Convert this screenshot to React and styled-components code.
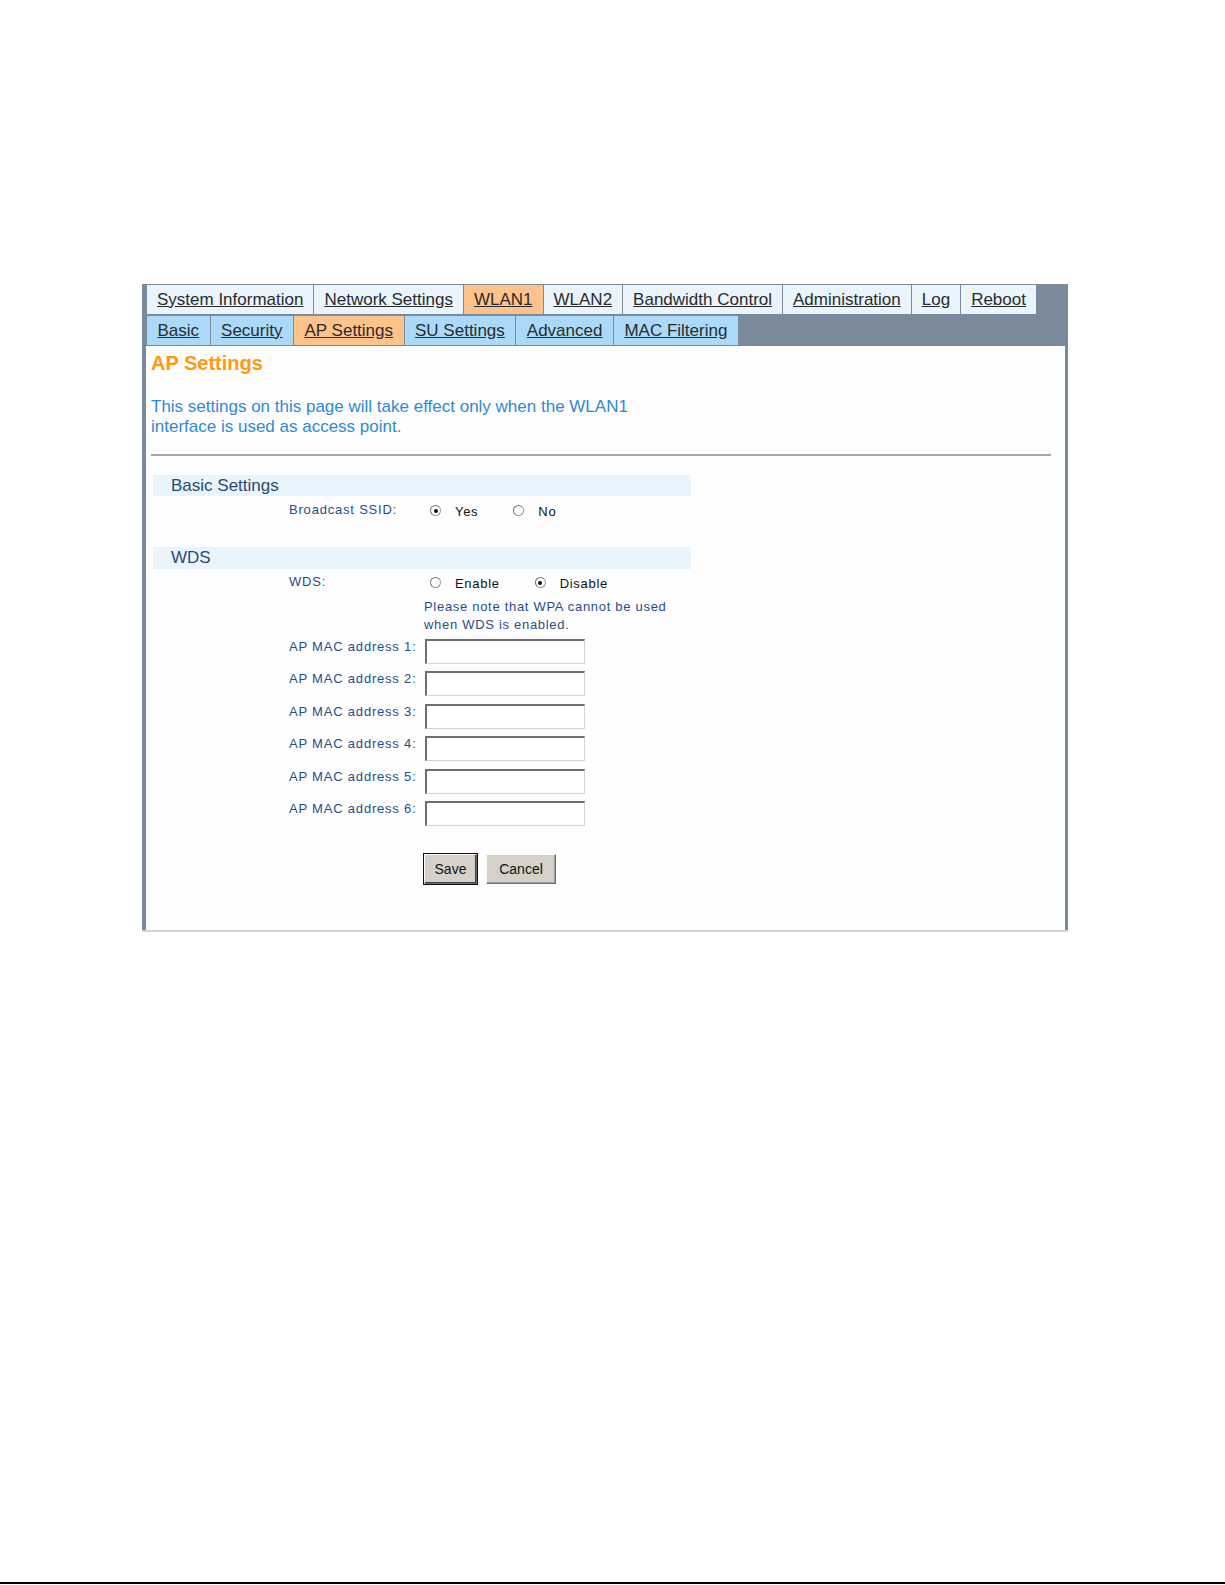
import React from 'react';
import styled, {createGlobalStyle} from 'styled-components';

const frameColor = '#7a8a9b';
const activeTab = '#fcc48c';
const labelBlue = '#1f4f86';

const GlobalStyle = createGlobalStyle`
  html, body {
    margin: 0;
    padding: 0;
    background: #ffffff;
  }
  body {
    font-family: "Liberation Sans", Arial, sans-serif;
  }
`;

const Page = styled.div`
  display: flex;
  flex-direction: column;
  height: 1585px;
  box-sizing: border-box;
  padding-top: 284px;
`;

const Frame = styled.div`
  width: 926px;
  margin-left: 142px;
  box-sizing: border-box;
  background: ${frameColor};
  padding: 1px 3px 0 4px;
  border-bottom: 2px solid #cfd5dd;
`;

const TabRow = styled.div`
  display: flex;
  gap: 1px;
  padding-left: 1px;
  margin-bottom: ${(props) => props.bottom || 0}px;
`;

const Tab = styled.a`
  display: flex;
  align-items: center;
  height: 29px;
  padding: 0 ${(props) => (props.sub ? 10.5 : 10)}px;
  font-size: 17px;
  color: #2b2b2b;
  text-decoration: underline;
  cursor: pointer;
  background: ${(props) =>
    props.active ? activeTab : props.sub ? '#aad9fa' : '#eaf4fd'};
`;

const Content = styled.div`
  background: #fefefe;
  height: 584px;
  box-sizing: border-box;
  padding: 5px 14px 0 5px;
`;

const Heading = styled.h1`
  margin: 0;
  font-size: 20px;
  line-height: 24px;
  font-weight: bold;
  color: #ff9a10;
`;

const Intro = styled.p`
  margin: 22px 0 0;
  font-size: 17px;
  line-height: 20px;
  color: #2c8ad6;
`;

const Rule = styled.div`
  height: 2px;
  background: #a8a8a8;
  margin: 17px 0 19px;
`;

const Form = styled.div`
  width: 538px;
  margin-left: 2px;
`;

const Band = styled.div`
  height: ${(props) => props.h || 21}px;
  display: flex;
  align-items: center;
  padding-left: 18px;
  background: #e9f4fd;
  font-size: 17px;
  color: #2a4b70;
`;

const Row = styled.div`
  display: grid;
  grid-template-columns: 136px 135px 1fr;
  align-items: start;
  height: ${(props) => props.h || 'auto'};
  padding-top: ${(props) => props.top || 0}px;
  box-sizing: border-box;
`;

const Label = styled.div`
  grid-column: 2;
  font-size: 13px;
  letter-spacing: 0.8px;
  color: ${labelBlue};
  line-height: 16px;
  padding-top: ${(props) => props.top || 0}px;
  white-space: nowrap;
`;

const Control = styled.div`
  grid-column: 3;
  display: flex;
  align-items: center;
`;

const Option = styled.label`
  display: flex;
  align-items: center;
  font-size: 13px;
  letter-spacing: 0.7px;
  color: #111;
  margin-right: 29px;
  padding-top: 2px;
`;

const Radio = styled.input.attrs({type: 'radio'})`
  appearance: none;
  width: 11px;
  height: 11px;
  margin: 0 14px 2px 6px;
  border-radius: 50%;
  border: 1px solid #9a9a9a;
  border-top-color: #6e6e6e;
  border-left-color: #6e6e6e;
  background: #fff;
  position: relative;
  box-sizing: border-box;
  &:checked::after {
    content: '';
    position: absolute;
    left: 2.5px;
    top: 2.5px;
    width: 4px;
    height: 4px;
    border-radius: 50%;
    background: #111;
  }
`;

const Note = styled.div`
  grid-column: 3;
  font-size: 13px;
  letter-spacing: 0.7px;
  line-height: 18px;
  color: ${labelBlue};
`;

const MacInput = styled.input`
  width: 160px;
  height: 25px;
  box-sizing: border-box;
  margin: 0 0 0 1px;
  border-top: 2px solid #6f6f6f;
  border-left: 2px solid #6f6f6f;
  border-bottom: 1px solid #d6d3cc;
  border-right: 1px solid #d6d3cc;
  background: #fff;
  outline: none;
`;

const Buttons = styled.div`
  grid-column: 3;
  display: flex;
  gap: 9px;
`;

const Button = styled.button`
  height: 30px;
  width: ${(props) => props.w}px;
  box-sizing: border-box;
  font-family: "Liberation Sans", Arial, sans-serif;
  font-size: 14px;
  color: #111;
  background: #d5d1c9;
  border: 1px solid;
  border-color: #fff #6e6e6e #6e6e6e #fff;
  box-shadow: ${(props) =>
    props.primary ? '0 0 0 1px #111, inset -1px -1px 0 #404040' : 'inset -1px -1px 0 #9a9a9a'};
  padding: 0;
  cursor: pointer;
`;

const BottomLine = styled.div`
  margin-top: auto;
  height: 2px;
  background: #000;
  margin-bottom: 1px;
`;

const mainTabs = [
  'System Information',
  'Network Settings',
  'WLAN1',
  'WLAN2',
  'Bandwidth Control',
  'Administration',
  'Log',
  'Reboot',
];
const subTabs = ['Basic', 'Security', 'AP Settings', 'SU Settings', 'Advanced', 'MAC Filtering'];

const App = () => {
  return (
    <Page>
      <GlobalStyle />
      <Frame>
        <TabRow bottom={2}>
          {mainTabs.map((t) => (
            <Tab key={t} active={t === 'WLAN1'}>
              {t}
            </Tab>
          ))}
        </TabRow>
        <TabRow bottom={1}>
          {subTabs.map((t) => (
            <Tab key={t} sub active={t === 'AP Settings'}>
              {t}
            </Tab>
          ))}
        </TabRow>
        <Content>
          <Heading>AP Settings</Heading>
          <Intro>
            This settings on this page will take effect only when the WLAN1
            <br />
            interface is used as access point.
          </Intro>
          <Rule />
          <Form>
            <Band>Basic Settings</Band>
            <Row h="51px" top={6}>
              <Label>Broadcast SSID:</Label>
              <Control>
                <Option>
                  <Radio name="ssid" defaultChecked />
                  Yes
                </Option>
                <Option>
                  <Radio name="ssid" />
                  No
                </Option>
              </Control>
            </Row>
            <Band h={22}>WDS</Band>
            <Row top={5}>
              <Label>WDS:</Label>
              <Control>
                <Option>
                  <Radio name="wds" />
                  Enable
                </Option>
                <Option>
                  <Radio name="wds" defaultChecked />
                  Disable
                </Option>
              </Control>
            </Row>
            <Row top={7}>
              <Note>
                Please note that WPA cannot be used
                <br />
                when WDS is enabled.
              </Note>
            </Row>
            {[1, 2, 3, 4, 5, 6].map((n) => (
              <Row key={n} h={n === 1 ? '37.4px' : '32.4px'} top={n === 1 ? 5 : 0}>
                <Label>AP MAC address {n}:</Label>
                <Control>
                  <MacInput />
                </Control>
              </Row>
            ))}
            <Row top={21}>
              <Buttons>
                <Button primary w={53}>
                  Save
                </Button>
                <Button w={70}>Cancel</Button>
              </Buttons>
            </Row>
          </Form>
        </Content>
      </Frame>
      <BottomLine />
    </Page>
  );
};

export default App;
